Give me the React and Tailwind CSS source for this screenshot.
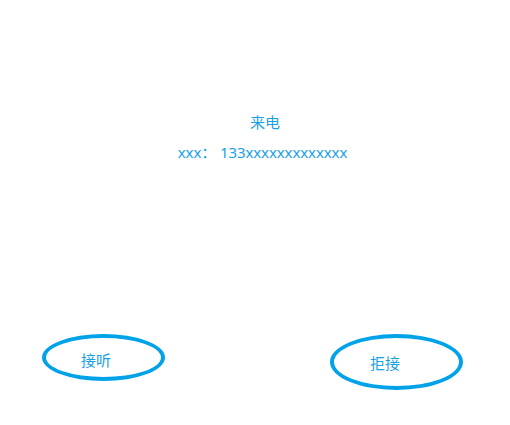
export default function App() {
  return (
    <div
      className="w-[510px] h-[425px] bg-white flex flex-col text-[#1a9fe6] text-[15px] leading-[20px]"
      style={{ fontFamily: '"Noto Sans", "Noto Sans CJK SC", sans-serif' }}
    >
      <div className="pt-[112px] pl-[15px] flex flex-col items-center gap-[10px]">
        <div className="pl-[5px]">来电</div>
        <div className="tracking-[-0.1px]">xxx： 133xxxxxxxxxxxxx</div>
      </div>
      <div className="mt-[172px] pl-[42px] pr-[47px] flex justify-between items-start">
        <div className="w-[123px] h-[47px] border-4 border-[#00a2e8] rounded-[50%] flex items-center pl-[35px] pt-[4px]">
          接听
        </div>
        <div className="w-[133px] h-[56px] border-4 border-[#00a2e8] rounded-[50%] flex items-center pl-[36px] pt-[2px]">
          拒接
        </div>
      </div>
    </div>
  );
}
